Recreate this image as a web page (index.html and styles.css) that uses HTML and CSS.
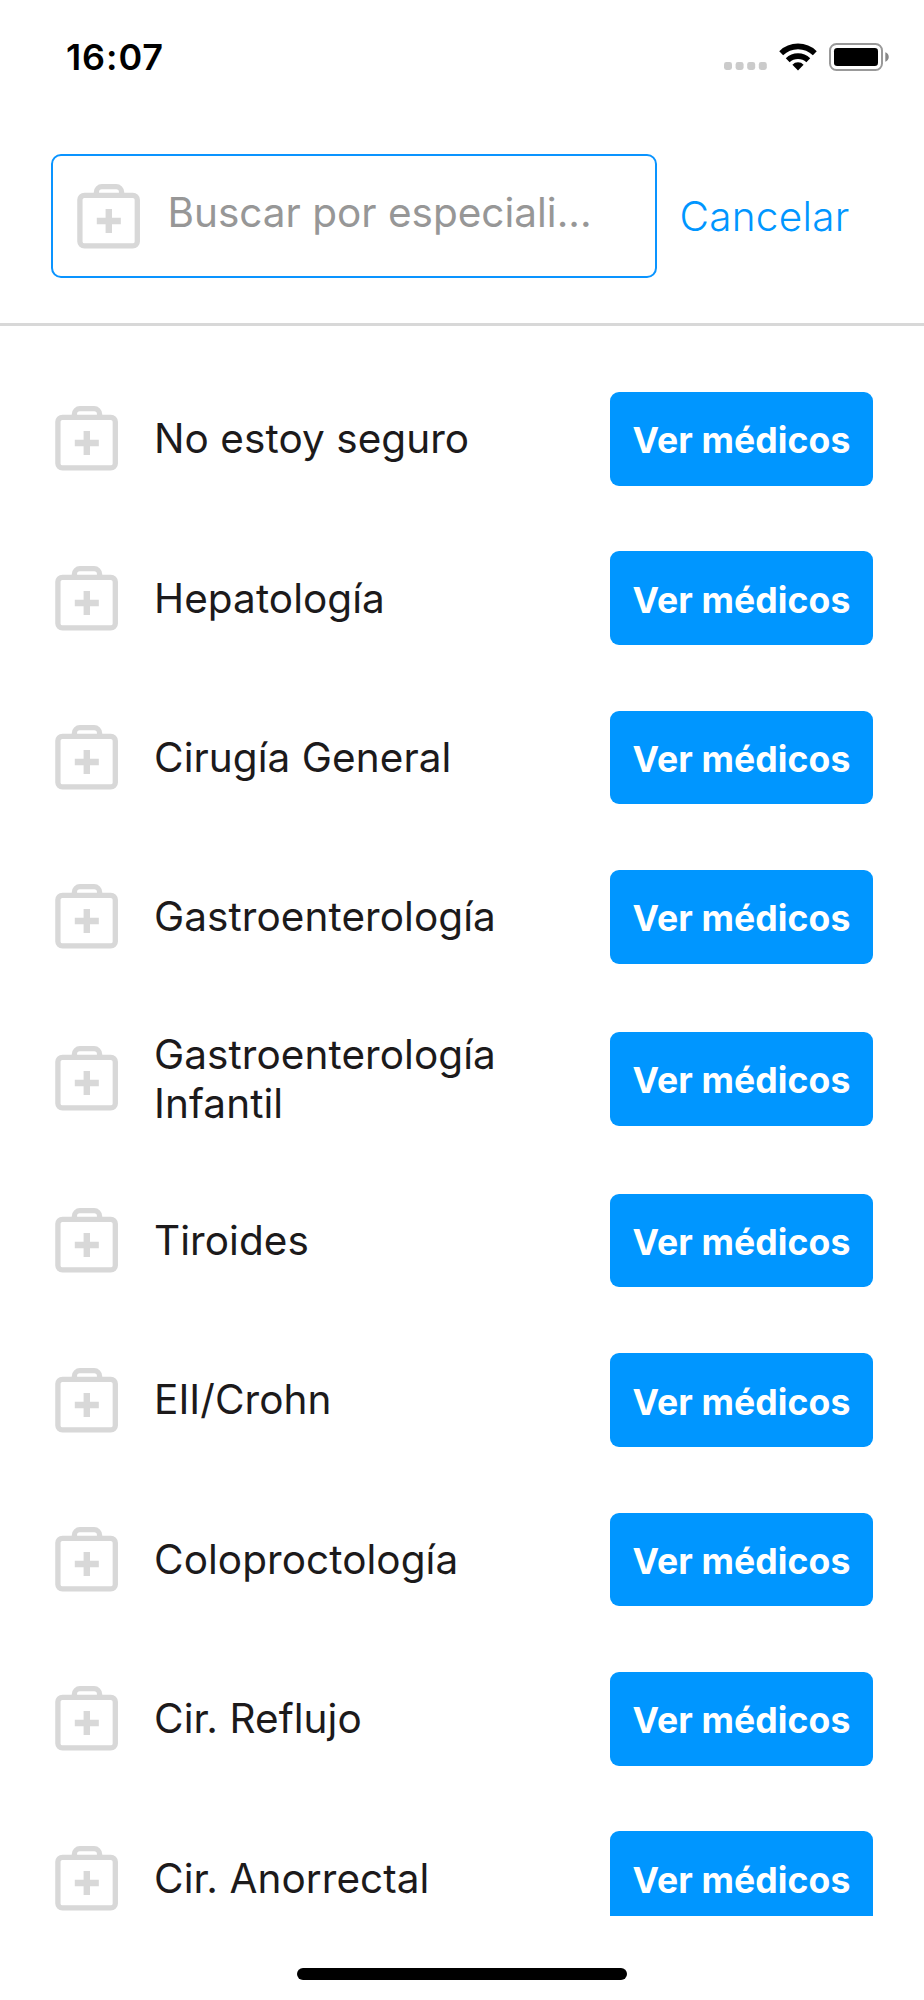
FILE: index.html
```html
<!DOCTYPE html>
<html lang="es">
<head>
<meta charset="utf-8">
<title>Especialidades</title>
<link rel="stylesheet" href="styles.css">
</head>
<body>
<svg class="defs" aria-hidden="true">
  <symbol id="kit" viewBox="0 0 63 65">
    <rect x="2.9" y="11.3" width="57.4" height="50.6" rx="4.5" fill="none" stroke="currentColor" stroke-width="5.3"/>
    <path d="M19.4 10V8.2a5.5 5.5 0 0 1 5.5-5.5h14.2a5.5 5.5 0 0 1 5.5 5.5V10" fill="none" stroke="currentColor" stroke-width="5.3"/>
    <path d="M31.8 25v24M19.8 37h24" fill="none" stroke="currentColor" stroke-width="6.4"/>
  </symbol>
</svg>
<div class="screen">
  <div class="status">
    <span class="time">16:07</span>
    <div class="indicators">
      <svg class="cell" viewBox="0 0 43 8"><g fill="#cbcbcb"><rect x="0" width="8" height="8" rx="2.4"/><rect x="11.6" width="8" height="8" rx="2.4"/><rect x="23.2" width="8" height="8" rx="2.4"/><rect x="34.8" width="8" height="8" rx="2.4"/></g></svg>
      <svg class="wifi" viewBox="0 0 38 28"><g fill="none" stroke="#000" stroke-width="5.6"><path d="M2.2 10.2A24.2 24.2 0 0 1 35.8 10.2"/><path d="M8.7 17.2A15 15 0 0 1 29.3 17.2"/></g><path d="M19 27.4l-5.6-5.7a7.9 7.9 0 0 1 11.2 0z"/></svg>
      <svg class="battery" viewBox="0 0 61 28"><rect x="1" y="1" width="52" height="26" rx="6.5" fill="none" stroke="#999" stroke-width="2"/><rect x="5" y="5" width="44" height="18" rx="3.2"/><path d="M56.3 9.3c4.6 1.4 4.6 8 0 9.4z" fill="#888"/></svg>
    </div>
  </div>
  <header class="search">
    <div class="field">
      <svg class="kit"><use href="#kit"/></svg>
      <span class="placeholder">Buscar por especiali...</span>
    </div>
    <span class="cancel">Cancelar</span>
  </header>
  <main class="list">
    <div class="row"><svg class="kit"><use href="#kit"/></svg><span class="name">No estoy seguro</span><button class="btn">Ver médicos</button></div>
    <div class="row"><svg class="kit"><use href="#kit"/></svg><span class="name">Hepatología</span><button class="btn">Ver médicos</button></div>
    <div class="row"><svg class="kit"><use href="#kit"/></svg><span class="name">Cirugía General</span><button class="btn">Ver médicos</button></div>
    <div class="row"><svg class="kit"><use href="#kit"/></svg><span class="name">Gastroenterología</span><button class="btn">Ver médicos</button></div>
    <div class="row"><svg class="kit"><use href="#kit"/></svg><span class="name">Gastroenterología Infantil</span><button class="btn">Ver médicos</button></div>
    <div class="row"><svg class="kit"><use href="#kit"/></svg><span class="name">Tiroides</span><button class="btn">Ver médicos</button></div>
    <div class="row"><svg class="kit"><use href="#kit"/></svg><span class="name">EII/Crohn</span><button class="btn">Ver médicos</button></div>
    <div class="row"><svg class="kit"><use href="#kit"/></svg><span class="name">Coloproctología</span><button class="btn">Ver médicos</button></div>
    <div class="row"><svg class="kit"><use href="#kit"/></svg><span class="name">Cir. Reflujo</span><button class="btn">Ver médicos</button></div>
    <div class="row"><svg class="kit"><use href="#kit"/></svg><span class="name">Cir. Anorrectal</span><button class="btn">Ver médicos</button></div>
  </main>
  <footer class="bottom"><div class="home"></div></footer>
</div>
</body>
</html>
```
FILE: styles.css
```css
* { box-sizing: border-box; }
body { margin: 0; background: #fff; font-family: Inter, sans-serif; color: #1c1a1b; }
.defs { display: none; }
.screen { width: 924px; height: 2000px; display: flex; flex-direction: column; overflow: hidden; }
.status { height: 154px; flex: none; display: flex; justify-content: space-between; align-items: flex-start; padding: 35px 34px 0 66px; }
.time { font-size: 36px; line-height: 44px; font-weight: 600; color: #000; letter-spacing: .9px; }
.indicators { display: flex; align-items: flex-end; padding-top: 8px; }
.indicators svg { display: block; }
.cell { width: 43px; height: 8px; margin-bottom: 1px; }
.wifi { width: 38px; height: 28px; margin: 0 12px; }
.battery { width: 61px; height: 28px; }
.search { height: 172px; flex: none; display: flex; align-items: flex-start; padding-left: 51px; border-bottom: 3px solid #d8d8d8; }
.field { width: 606px; height: 123.5px; display: flex; align-items: center; padding: 0 24px; border: 2px solid #0a94ff; border-radius: 10px; }
.kit { width: 63px; height: 65px; flex: none; color: #d8d8d8; }
.field .kit { margin-top: 1.5px; }
.placeholder { font-size: 40.5px; line-height: 49px; margin: -6px 0 0 27.5px; color: #979797; white-space: nowrap; }
.cancel { font-size: 40.5px; line-height: 49px; margin: 38px 0 0 22.5px; color: #0096ff; font-weight: 300; letter-spacing: .25px; }
.list { flex: none; height: 1590px; overflow: hidden; display: flex; flex-direction: column; gap: 65.9px; padding: 66px 51px 0 55px; }
.row { flex: none; min-height: 93.5px; display: flex; align-items: center; }
.name { flex: 1; font-size: 40.5px; line-height: 49.2px; margin: 0 80px 0 36px; letter-spacing: .06px; }
.btn { width: 263px; height: 93.5px; padding: 4px 0 0; border: 0; border-radius: 9px; background: #0096ff; color: #fff; font: 700 35.6px/43px Inter, sans-serif; letter-spacing: .1px; white-space: nowrap; }
.bottom { flex: 1; display: flex; justify-content: center; align-items: flex-start; padding-top: 52px; }
.home { width: 330px; height: 12px; border-radius: 6px; background: #000; }
```
